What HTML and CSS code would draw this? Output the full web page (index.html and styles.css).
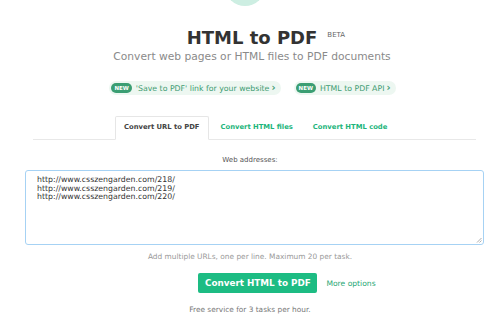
FILE: index.html
```html
<!DOCTYPE html>
<html>
<head>
<meta charset="utf-8">
<link rel="stylesheet" href="styles.css">
</head>
<body>
<div class="page">
  <div class="logo-circle"></div>
  <h1 class="title">HTML to PDF<sup class="beta">BETA</sup></h1>
  <p class="subtitle">Convert web pages or HTML files to PDF documents</p>
  <div class="badges">
    <a class="pill"><span class="new">NEW</span>'Save to PDF' link for your website <span class="chev">&#8250;</span></a>
    <a class="pill"><span class="new">NEW</span>HTML to PDF API <span class="chev">&#8250;</span></a>
  </div>
  <div class="tabs">
    <span class="tab active">Convert URL to PDF</span>
    <span class="tab">Convert HTML files</span>
    <span class="tab">Convert HTML code</span>
  </div>
  <div class="label">Web addresses:</div>
  <div class="area">
    <div class="area-text">http://www.csszengarden.com/218/<br>http://www.csszengarden.com/219/<br>http://www.csszengarden.com/220/</div>
    <svg class="grip" width="6" height="6" viewBox="0 0 6 6"><path d="M5.5 1 L1 5.5 M5.5 3.5 L3.5 5.5" stroke="#999" stroke-width="0.8"/></svg>
  </div>
  <div class="hint">Add multiple URLs, one per line. Maximum 20 per task.</div>
  <div class="actions">
    <span class="btn">Convert HTML to PDF</span>
    <a class="more">More options</a>
  </div>
  <div class="free">Free service for 3 tasks per hour.</div>
</div>
</body>
</html>
```
FILE: styles.css
```css
html, body { margin: 0; padding: 0; background: #fff; }
body { font-family: "DejaVu Sans", sans-serif; overflow: hidden; }
.page { display: flex; flex-direction: column; align-items: center; width: 500px; }
.logo-circle { width: 40px; height: 40px; border-radius: 50%; background: #cdeee2; margin: -34px 0 0 -10px; }
.title { margin: 22px 0 0 4px; font-size: 18px; font-weight: bold; color: #333; line-height: 20px; position: relative; }
.beta { position: absolute; left: 100%; top: -3px; margin-left: 10px; font-size: 7px; font-weight: normal; color: #666; }
.subtitle { margin: 1px 0 0 4px; font-size: 10.7px; color: #8a8a8a; line-height: 16px; }
.badges { display: flex; gap: 13px; margin-top: 16px; margin-left: 5px; }
.pill { display: flex; align-items: center; height: 14px; padding: 0 5px 0 2px; background: #edf7f1; border-radius: 7px; font-size: 7.8px; color: #3e9c72; white-space: nowrap; }
.new { background: #3b9e73; color: #fff; font-size: 5.5px; font-weight: bold; border-radius: 5px; padding: 1.5px 3px; margin-right: 4px; line-height: 7px; }
.chev { font-weight: bold; font-size: 10px; margin-left: 2px; line-height: 10px; }
.tabs { display: flex; width: 443px; margin: 21px 0 0 9px; padding-left: 82px; box-sizing: border-box; border-bottom: 1px solid #e8e8e8; }
.tab { font-size: 6.8px; font-weight: bold; color: #1db57c; padding: 7px 10px 7px; line-height: 8px; white-space: nowrap; }
.tab.active { color: #444; border: 1px solid #e6e6e6; border-bottom: 1px solid #fff; margin-bottom: -1px; background: #fff; padding: 6px 8px 8px; border-radius: 2px 2px 0 0; margin-right: 2px; }
.label { font-size: 7px; color: #555; margin-top: 15px; line-height: 10px; }
.area { width: 459px; height: 75px; box-sizing: border-box; margin-top: 5px; margin-left: 9px; border: 1px solid #a6d2f4; border-radius: 3px; position: relative; padding: 5px 11px; }
.area-text { font-size: 7.8px; color: #333; line-height: 8.6px; }
.grip { position: absolute; right: 1px; bottom: 1px; }
.hint { font-size: 7.4px; color: #999; margin-top: 7px; line-height: 10px; }
.actions { display: flex; align-items: center; margin-top: 11px; margin-left: 74px; gap: 9px; }
.btn { background: #1dbc83; color: #fff; font-size: 8.8px; font-weight: bold; height: 20px; line-height: 20px; width: 119px; text-align: center; border-radius: 2px; white-space: nowrap; }
.more { font-size: 7.6px; color: #2aa876; white-space: nowrap; }
.free { font-size: 7.4px; color: #777; margin-top: 12px; line-height: 10px; }
```
